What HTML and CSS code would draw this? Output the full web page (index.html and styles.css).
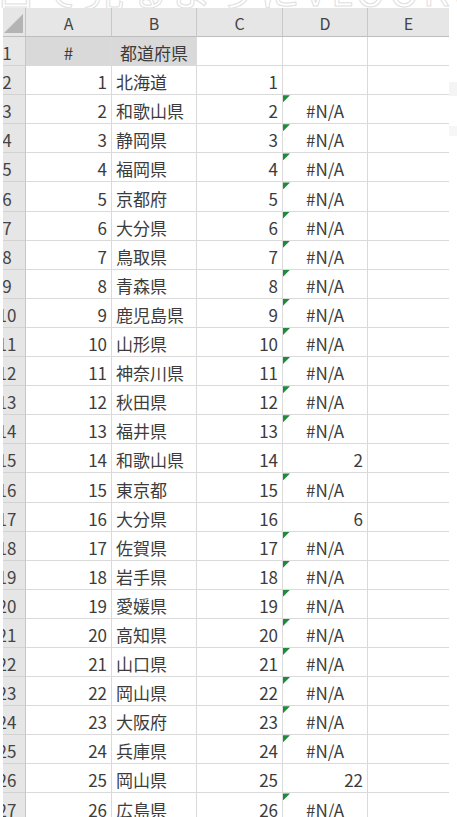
FILE: index.html
```html
<!DOCTYPE html>
<html lang="ja">
<head>
<meta charset="utf-8">
<title>都道府県</title>
<link rel="stylesheet" href="styles.css">
</head>
<body>
<div class="page">
  <div class="banner"><span class="banner-text">目で見るようにVLOOKUP関数の照合</span></div>
  <div class="area">
    <div class="sheet">
      <div class="corner"><span class="tri"></span></div>
      <div class="ch">A</div><div class="ch">B</div><div class="ch">C</div><div class="ch">D</div><div class="ch last">E</div>

      <div class="rh">1</div><div class="c hd center">#</div><div class="c hd center">都道府県</div><div class="c"></div><div class="c"></div><div class="c"></div>
      <div class="rh">2</div><div class="c num">1</div><div class="c">北海道</div><div class="c num">1</div><div class="c"></div><div class="c"></div>
      <div class="rh">3</div><div class="c num">2</div><div class="c">和歌山県</div><div class="c num">2</div><div class="c err">#N/A</div><div class="c"></div>
      <div class="rh">4</div><div class="c num">3</div><div class="c">静岡県</div><div class="c num">3</div><div class="c err">#N/A</div><div class="c"></div>
      <div class="rh">5</div><div class="c num">4</div><div class="c">福岡県</div><div class="c num">4</div><div class="c err">#N/A</div><div class="c"></div>
      <div class="rh">6</div><div class="c num">5</div><div class="c">京都府</div><div class="c num">5</div><div class="c err">#N/A</div><div class="c"></div>
      <div class="rh">7</div><div class="c num">6</div><div class="c">大分県</div><div class="c num">6</div><div class="c err">#N/A</div><div class="c"></div>
      <div class="rh">8</div><div class="c num">7</div><div class="c">鳥取県</div><div class="c num">7</div><div class="c err">#N/A</div><div class="c"></div>
      <div class="rh">9</div><div class="c num">8</div><div class="c">青森県</div><div class="c num">8</div><div class="c err">#N/A</div><div class="c"></div>
      <div class="rh">10</div><div class="c num">9</div><div class="c">鹿児島県</div><div class="c num">9</div><div class="c err">#N/A</div><div class="c"></div>
      <div class="rh">11</div><div class="c num">10</div><div class="c">山形県</div><div class="c num">10</div><div class="c err">#N/A</div><div class="c"></div>
      <div class="rh">12</div><div class="c num">11</div><div class="c">神奈川県</div><div class="c num">11</div><div class="c err">#N/A</div><div class="c"></div>
      <div class="rh">13</div><div class="c num">12</div><div class="c">秋田県</div><div class="c num">12</div><div class="c err">#N/A</div><div class="c"></div>
      <div class="rh">14</div><div class="c num">13</div><div class="c">福井県</div><div class="c num">13</div><div class="c err">#N/A</div><div class="c"></div>
      <div class="rh">15</div><div class="c num">14</div><div class="c">和歌山県</div><div class="c num">14</div><div class="c num">2</div><div class="c"></div>
      <div class="rh">16</div><div class="c num">15</div><div class="c">東京都</div><div class="c num">15</div><div class="c err">#N/A</div><div class="c"></div>
      <div class="rh">17</div><div class="c num">16</div><div class="c">大分県</div><div class="c num">16</div><div class="c num">6</div><div class="c"></div>
      <div class="rh">18</div><div class="c num">17</div><div class="c">佐賀県</div><div class="c num">17</div><div class="c err">#N/A</div><div class="c"></div>
      <div class="rh">19</div><div class="c num">18</div><div class="c">岩手県</div><div class="c num">18</div><div class="c err">#N/A</div><div class="c"></div>
      <div class="rh">20</div><div class="c num">19</div><div class="c">愛媛県</div><div class="c num">19</div><div class="c err">#N/A</div><div class="c"></div>
      <div class="rh">21</div><div class="c num">20</div><div class="c">高知県</div><div class="c num">20</div><div class="c err">#N/A</div><div class="c"></div>
      <div class="rh">22</div><div class="c num">21</div><div class="c">山口県</div><div class="c num">21</div><div class="c err">#N/A</div><div class="c"></div>
      <div class="rh">23</div><div class="c num">22</div><div class="c">岡山県</div><div class="c num">22</div><div class="c err">#N/A</div><div class="c"></div>
      <div class="rh">24</div><div class="c num">23</div><div class="c">大阪府</div><div class="c num">23</div><div class="c err">#N/A</div><div class="c"></div>
      <div class="rh">25</div><div class="c num">24</div><div class="c">兵庫県</div><div class="c num">24</div><div class="c err">#N/A</div><div class="c"></div>
      <div class="rh">26</div><div class="c num">25</div><div class="c">岡山県</div><div class="c num">25</div><div class="c num">22</div><div class="c"></div>
      <div class="rh">27</div><div class="c num">26</div><div class="c">広島県</div><div class="c num">26</div><div class="c err">#N/A</div><div class="c"></div>
    </div>
    <div class="gutter">
      <div class="ghost g1"></div>
      <div class="ghost g2"></div>
    </div>
  </div>
</div>
</body>
</html>
```
FILE: styles.css
```css
html, body {
  margin: 0;
  padding: 0;
  background: #ffffff;
}
body {
  width: 457px;
  height: 817px;
  overflow: hidden;
  font-family: "Noto Sans CJK JP", "Noto Sans", sans-serif;
  color: #3c3c3c;
}
.page {
  position: relative;
  width: 457px;
  height: 817px;
  overflow: hidden;
}
.page::before {
  content: "";
  position: absolute;
  left: 0;
  top: 8px;
  width: 3px;
  bottom: 0;
  background: #ffffff;
  z-index: 2;
}
.banner {
  height: 8px;
  overflow: hidden;
  white-space: nowrap;
}
.banner-text {
  display: block;
  margin-top: -31px;
  margin-left: -4px;
  font-size: 40px;
  line-height: 40px;
  letter-spacing: 4px;
  color: #ffffff;
  -webkit-text-stroke: 1px #e0e0e0;
}
.area {
  display: flex;
}
.sheet {
  display: grid;
  grid-template-columns: 26px 86px 85px 86px 85px 81px;
  grid-template-rows: 29px repeat(27, 29.1px);
  width: 449px;
  flex: none;
}
.gutter {
  flex: 1;
  display: flex;
  flex-direction: column;
}
.ghost {
  background: #f4f4f4;
}
.g1 {
  margin-top: 74px;
  height: 14px;
}
.g2 {
  margin-top: 30px;
  height: 10px;
  background: #f6f6f6;
}
.corner {
  background: #e6e6e6;
  border-right: 1px solid #c6c6c6;
  border-bottom: 1px solid #bdbdbd;
  display: flex;
  justify-content: flex-end;
  align-items: flex-end;
  padding: 0 2px 3px 0;
}
.tri {
  width: 19px;
  height: 19px;
  background: #b4b4b4;
  clip-path: polygon(100% 0, 100% 100%, 0 100%);
}
.ch {
  background: #e6e6e6;
  border-right: 1px solid #c8c8c8;
  border-bottom: 1px solid #bdbdbd;
  display: flex;
  justify-content: center;
  align-items: flex-end;
  padding-bottom: 5px;
  font-size: 16px;
  line-height: 16px;
  color: #444444;
}
.ch.last {
  border-right: none;
}
.rh {
  background: #e6e6e6;
  border-right: 1px solid #c6c6c6;
  border-bottom: 1px solid #d2d2d2;
  display: flex;
  justify-content: center;
  align-items: flex-end;
  padding: 0 11px 4px 0;
  font-size: 17px;
  line-height: 17px;
  color: #444444;
  white-space: nowrap;
}
.c {
  position: relative;
  border-right: 1px solid #dadada;
  border-bottom: 1px solid #dadada;
  display: flex;
  align-items: flex-end;
  padding: 0 4px 4px 4px;
  font-size: 17px;
  line-height: 17px;
  white-space: nowrap;
  overflow: visible;
}
.c:nth-child(6n) {
  border-right: none;
}
.c.num {
  justify-content: flex-end;
  padding-right: 4px;
}
.c.center {
  justify-content: center;
}
.c.hd {
  background: #d9d9d9;
}
.c.err {
  justify-content: center;
}
.c.err::before {
  content: "";
  position: absolute;
  left: 0;
  top: 0;
  width: 7px;
  height: 7px;
  background: #1f8a3c;
  clip-path: polygon(0 0, 100% 0, 0 100%);
}
```
